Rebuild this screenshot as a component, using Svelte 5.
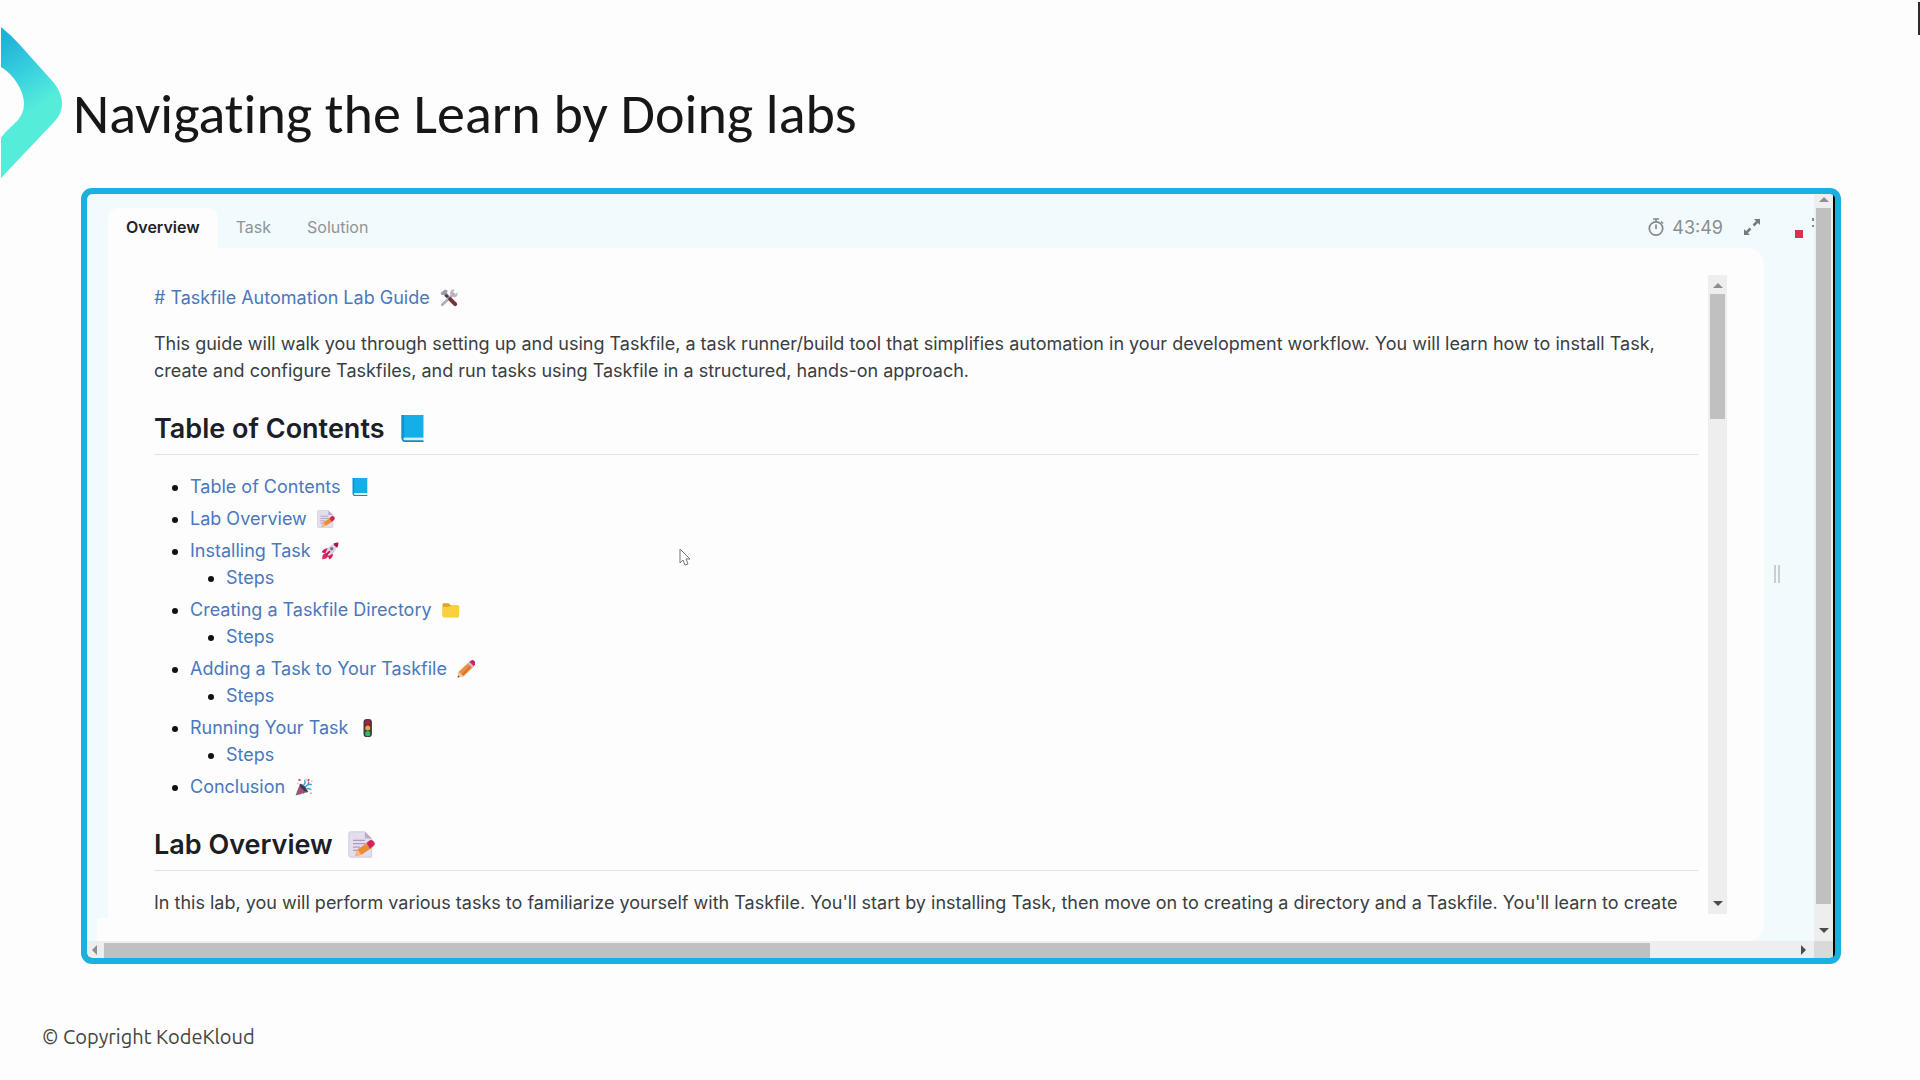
<script>
    const toc = [
        { label: "Table of Contents", icon: "book" },
        { label: "Lab Overview", icon: "memo" },
        { label: "Installing Task", icon: "rocket", steps: true },
        { label: "Creating a Taskfile Directory", icon: "folder", steps: true },
        { label: "Adding a Task to Your Taskfile", icon: "pencil", steps: true },
        { label: "Running Your Task", icon: "light", steps: true },
        { label: "Conclusion", icon: "party" }
    ];
    const tabs = ["Overview", "Task", "Solution"];
    let active = "Overview";
</script>

{#snippet emoji(name)}
    <svg class="emoji" viewBox="0 0 32 32" aria-hidden="true">
        {#if name == "book"}
            <path d="M3 0h26v27H3z" fill="#14aee8" />
            <path d="M3 0h3v28H3z" fill="#1391cc" />
            <path d="M5 27h24v3H5z" fill="#d9edf6" />
            <path d="M3 27q0 5 4 5h22v-2H7q-2 0-2-3z" fill="#1089c0" />
        {:else if name == "memo"}
            <path d="M3 1h17l8 8v22H3q-2 0-2-2V3q0-2 2-2z" fill="#e5dded" stroke="#cdc2da" />
            <path d="M20 1v8h8z" fill="#b9abc9" />
            <path d="M6 11h14M6 15h15M6 19h8M6 23h5" stroke="#ac9bc2" stroke-width="1.5" />
            <path d="M8 30l3-8 12-8 5 6-12 8z" fill="#ec8c37" />
            <path d="M8 30l3-8 5 6z" fill="#f8ba7b" />
            <path d="M22 14l4-3q3-1 5 2t-1 5l-4 3z" fill="#ce2757" />
        {:else if name == "rocket"}
            <path d="M1 18q4-7 11-7l9 10q1 6-6 10l-3-6-5-5z" fill="#d51c56" />
            <path d="M7 20l6 5-3 4-8 2 1-8z" fill="#dd2460" />
            <path d="M8 19Q13 4 30 1q-2 18-16 24z" fill="#ddd2e3" />
            <path d="M22 3q4-2 9-2 0 5-2 9-5-2-7-7z" fill="#a8123c" />
            <circle cx="19" cy="12" r="3" fill="#7b7190" />
            <path d="M10 22l5-5" stroke="#b5144b" stroke-width="3" stroke-linecap="round" />
        {:else if name == "folder"}
            <path d="M1 6q0-2 2-2h9l4 4h12q2 0 2 3v16q0 2-2 2H4q-3 0-3-3z" fill="#dea526" />
            <path d="M1 12q0-2 2-2h10l4-2h12q2 0 2 3l-1 16q0 2-2 2H4q-3 0-3-3z" fill="#f9d13c" />
        {:else if name == "pencil"}
            <path d="M1 31l2-10L22 3l8 8-18 18z" fill="#ec8e40" />
            <path d="M9 27L27 8" stroke="#ce6629" stroke-width="2" />
            <path d="M1 31l2-10 9 8z" fill="#f3c9a2" />
            <path d="M1 31l1-4 3 3z" fill="#67505d" />
            <path d="M19 6l3-3 8 8-3 3z" fill="#c9c0ca" />
            <path d="M22 3l3-2q3-2 6 1t1 6l-2 3z" fill="#d21e63" />
        {:else if name == "light"}
            <rect x="8" y="0" width="15" height="32" rx="6" fill="#433b45" />
            <circle cx="15.500" cy="6" r="4.500" fill="#a72236" />
            <circle cx="15.500" cy="16" r="4.500" fill="#f2a33b" />
            <circle cx="15.500" cy="26" r="4.500" fill="#29bf69" />
        {:else if name == "party"}
            <path d="M1 31l8-21 14 15z" fill="#716579" />
            <path d="M7 17l9 10M4 23l5 6" stroke="#d43876" stroke-width="2.500" />
            <path d="M9 10q6 1 9 5t5 10q-4 1-10-5t-4-10z" fill="#483947" />
            <path d="M14 13q6-3 3-10M18 16q6-7 12-4M20 20q5-3 9 1" fill="none" stroke="#35a9dc" stroke-width="2.500" />
            <path d="M6 3l4 1M25 2l-2 4" stroke="#db3b77" stroke-width="3" />
            <path d="M4 10h2M20 3h2M27 27h3M29 6h2" stroke="#e9a13c" stroke-width="2.500" />
            <path d="M23 11l2-4" stroke="#8557c5" stroke-width="2" />
        {:else if name == "tools"}
            <path d="M4 28L24 9" stroke="#b4adb8" stroke-width="5" stroke-linecap="round" />
            <path d="M22 1q-6 4-3 10t11 2l2-7-5 3-4-3 3-5z" fill="#bdb5c1" />
            <path d="M10 10l7 7" stroke="#a89a9c" stroke-width="4" />
            <path d="M18 18l9 9" stroke="#6f343a" stroke-width="7" stroke-linecap="round" />
            <path d="M1 7l8-6 5 2-2 3 4 6-4 4-6-6-3 1z" fill="#a199a3" />
            <path d="M11 9l5 4-4 3-4-4z" fill="#463c44" />
        {/if}
    </svg>
{/snippet}

<div class="page">
    <header>
        <svg class="chevron" viewBox="0 0 64 160" aria-hidden="true">
            <defs>
                <linearGradient id="teal" gradientUnits="userSpaceOnUse" x1="0" y1="15" x2="44" y2="80">
                    <stop offset="0" stop-color="#21b0d6" />
                    <stop offset="0.500" stop-color="#36cfde" />
                    <stop offset="1" stop-color="#55edda" />
                </linearGradient>
            </defs>
            <path fill="url(#teal)" d="M1 3Q11 11 20 21L54 59Q62 69 62 80Q62 89 55 97L1 154V114Q5 108 13 101Q24 92 24 80Q24 70 17 59Q11 49 1 43z" />
        </svg>
        <h1>Navigating the Learn by Doing labs</h1>
        <div class="marker"></div>
    </header>

    <main class="frame">
        <div class="lab">
            <div class="gutter"><span></span></div>
            <section class="workspace">
                <div class="tabbar">
                    <div class="tabs" role="tablist">
                        {#each tabs as tab}
                            <button role="tab" aria-selected={active == tab} class:active={active == tab} on:click={() => (active = tab)}>{tab}</button>
                        {/each}
                    </div>
                    <div class="timer">
                        <svg width="18" height="20" viewBox="0 0 18 20" fill="none" stroke="#85898b" stroke-width="1.700" aria-hidden="true">
                            <circle cx="9" cy="11.500" r="6.700" />
                            <path d="M6 2h6M9 2v3M9 7.500V12M14 4.500l2 2" />
                        </svg>
                        <span>43:49</span>
                        <button class="expand" aria-label="Expand">
                            <svg width="18" height="18" viewBox="0 0 18 18" fill="#777b7d" stroke="#777b7d" aria-hidden="true">
                                <path d="M11 1h6v6zM7 17H1v-6z" stroke="none" />
                                <path d="M10.500 7.500l4-4M7.500 10.500l-4 4" stroke-width="2.500" />
                            </svg>
                        </button>
                    </div>
                </div>
                <div class="panel">
                    <article>
                        <p><a href="#guide"># Taskfile Automation Lab Guide</a> {@render emoji("tools")}</p>
                        <p>
                            This guide will walk you through setting up and using Taskfile, a task runner/build tool that simplifies automation in your development workflow. You will learn how to install Task, create and configure Taskfiles, and run tasks using Taskfile in a structured, hands-on approach.
                        </p>
                        <h2>Table of Contents {@render emoji("book")}</h2>
                        <ul>
                            {#each toc as item}
                                <li>
                                    <a href="#{item.icon}">{item.label}</a> {@render emoji(item.icon)}
                                    {#if item.steps}
                                        <ul>
                                            <li><a href="#{item.icon}-steps">Steps</a></li>
                                        </ul>
                                    {/if}
                                </li>
                            {/each}
                        </ul>
                        <h2>Lab Overview {@render emoji("memo")}</h2>
                        <p class="clip">In this lab, you will perform various tasks to familiarize yourself with Taskfile. You'll start by installing Task, then move on to creating a directory and a Taskfile. You'll learn to create</p>
                    </article>
                    <div class="vbar inner">
                        <i class="arrow up"></i>
                        <div class="thumb"></div>
                        <i class="arrow down"></i>
                    </div>
                </div>
            </section>
            <aside>
                <div class="status">
                    <span class="stop"></span>
                    <svg width="2" height="12" viewBox="0 0 2 12" aria-hidden="true">
                        <path d="M0 0h2v3H0zM0 7h2v2H0z" fill="#888" />
                    </svg>
                </div>
                <div class="grip"></div>
            </aside>
        </div>
        <div class="vbar outer">
            <i class="arrow up"></i>
            <div class="thumb"></div>
            <i class="arrow down"></i>
        </div>
        <div class="hbar">
            <i class="arrow left"></i>
            <div class="thumb"></div>
            <i class="arrow right"></i>
        </div>
        <div class="corner"></div>
        <svg class="cursor" width="12" height="18" viewBox="0 0 12 18" aria-hidden="true">
            <path d="M1 1v14l3-3 2 5 3-1-2-5h4z" fill="#fff" stroke="#777" />
        </svg>
    </main>

    <footer>© Copyright KodeKloud</footer>
</div>

<style>
    :global(body) {
        background: #fdfdfd;
    }
    .page {
        display: flex;
        flex-direction: column;
        height: 100vh;
        min-height: 700px;
        overflow: hidden;
        color: #3a3e42;
        font-family: Inter, sans-serif;
        font-size: 18px;
        line-height: 27px;
    }
    header {
        display: flex;
        flex: none;
        height: 188px;
    }
    .chevron {
        width: 64px;
        height: 160px;
        margin-top: 24px;
    }
    h1 {
        flex: 1;
        margin: 80px 0 0 9px;
        font-family: Carlito, Calibri, "Open Sans", sans-serif;
        font-size: 56px;
        line-height: 68px;
        font-weight: 400;
        font-variant-ligatures: none;
        color: #171717;
    }
    .marker {
        width: 2px;
        height: 33px;
        margin-top: 2px;
        background: #2d2d2d;
    }

    .frame {
        position: relative;
        flex: 1;
        min-height: 0;
        display: grid;
        grid-template-columns: minmax(0, 1fr) 19px;
        grid-template-rows: minmax(0, 1fr) 17px;
        margin: 0 79px 0 81px;
        border: 6px solid #18b1e0;
        border-radius: 11px;
        background: #000;
        padding-right: 2px;
        overflow: hidden;
    }
    .lab {
        display: flex;
        background: #f1fafc;
    }
    .gutter {
        display: flex;
        align-items: flex-end;
        justify-content: flex-end;
        width: 21px;
    }
    .gutter span {
        width: 11px;
        height: 23px;
        background: #fdfdfd;
        border-radius: 3px 0 0 0;
    }
    .workspace {
        flex: 1;
        min-width: 0;
        display: flex;
        flex-direction: column;
        padding-top: 14px;
    }
    .tabbar {
        display: flex;
        flex: none;
        justify-content: space-between;
        height: 40px;
    }
    .tabs {
        display: flex;
    }
    button {
        border: 0;
        background: none;
        padding: 0;
        font: inherit;
        cursor: pointer;
    }
    .tabs button {
        padding: 0 18px 2px;
        font-size: 16px;
        line-height: 24px;
        color: #8f9496;
    }
    .tabs .active {
        color: #1f2328;
        font-weight: 600;
        background: #fdfdfd;
        border-radius: 10px 10px 0 0;
    }
    .timer {
        display: flex;
        align-items: center;
        padding: 0 3px 2px 0;
        color: #8a8e90;
    }
    .timer span {
        margin: 0 20px 0 7px;
    }
    .expand {
        display: flex;
    }

    .panel {
        flex: 1;
        min-height: 0;
        display: flex;
        gap: 10px;
        padding: 27px 37px 27px 46px;
        background: #fdfdfd;
        border-radius: 0 16px 16px 0;
    }
    article {
        flex: 1;
        min-width: 0;
        padding-top: 9px;
        overflow: hidden;
    }
    p {
        margin: 0 0 19px;
    }
    .clip {
        white-space: nowrap;
    }
    h2 {
        margin: 27px 0 18px;
        padding-bottom: 7px;
        border-bottom: 1px solid #dfe2e4;
        font-size: 27px;
        line-height: 36px;
        font-weight: 600;
        color: #1c2026;
    }
    a {
        color: #4a78bd;
        text-decoration: none;
    }
    ul {
        margin: 0;
        padding-left: 36px;
        list-style: disc;
    }
    li + li {
        margin-top: 5px;
    }
    li::marker {
        color: #111;
    }
    .emoji {
        width: 18px;
        height: 18px;
        margin: 0 5px;
        vertical-align: -3px;
    }
    h2 .emoji {
        width: 27px;
        height: 27px;
        margin: 0 8px;
        vertical-align: -4px;
    }

    aside {
        width: 50px;
        display: flex;
        flex-direction: column;
    }
    .status {
        display: flex;
        align-items: center;
        justify-content: flex-end;
        gap: 9px;
        height: 60px;
    }
    .stop {
        width: 8px;
        height: 8px;
        margin-top: 19px;
        background: #d5324f;
    }
    .grip {
        width: 2px;
        height: 18px;
        margin: auto 32px 358px 10px;
        border: solid #c9cfd1;
        border-width: 0 2px;
    }

    .vbar {
        display: flex;
        flex-direction: column;
        align-items: center;
        background: #eee;
    }
    .inner {
        width: 19px;
    }
    .vbar .thumb {
        width: 15px;
        background: #c0c0c0;
    }
    .inner .thumb {
        height: 125px;
    }
    .outer .thumb {
        flex: 1;
        margin-bottom: 19px;
    }
    .arrow {
        flex: none;
        width: 0;
        height: 0;
        border: 5px solid transparent;
    }
    .up {
        border-top: 0;
        border-bottom-color: #8e8e8e;
        margin: 8px 0 6px;
    }
    .outer .up {
        margin: 3px 0 6px;
    }
    .down {
        border-bottom: 0;
        border-top-color: #4c4c4c;
        margin: auto 0 8px;
    }
    .outer .down {
        margin: 5px 0 8px;
    }
    .hbar {
        display: flex;
        align-items: center;
        background: #eee;
    }
    .hbar .thumb {
        flex: 1;
        height: 15px;
        margin-top: 2px;
        background: #c0c0c0;
    }
    .left {
        border-left: 0;
        border-right-color: #8e8e8e;
        margin: 0 7px 0 5px;
    }
    .right {
        border-right: 0;
        border-left-color: #4c4c4c;
        margin: 0 8px 0 151px;
    }
    .corner {
        background: #d9d9d9;
    }
    .cursor {
        position: absolute;
        left: 592px;
        top: 354px;
    }

    footer {
        flex: none;
        height: 57px;
        padding: 59px 42px 0;
        font-family: Ubuntu, "Noto Sans", sans-serif;
        font-size: 20px;
        color: #444;
    }
</style>
